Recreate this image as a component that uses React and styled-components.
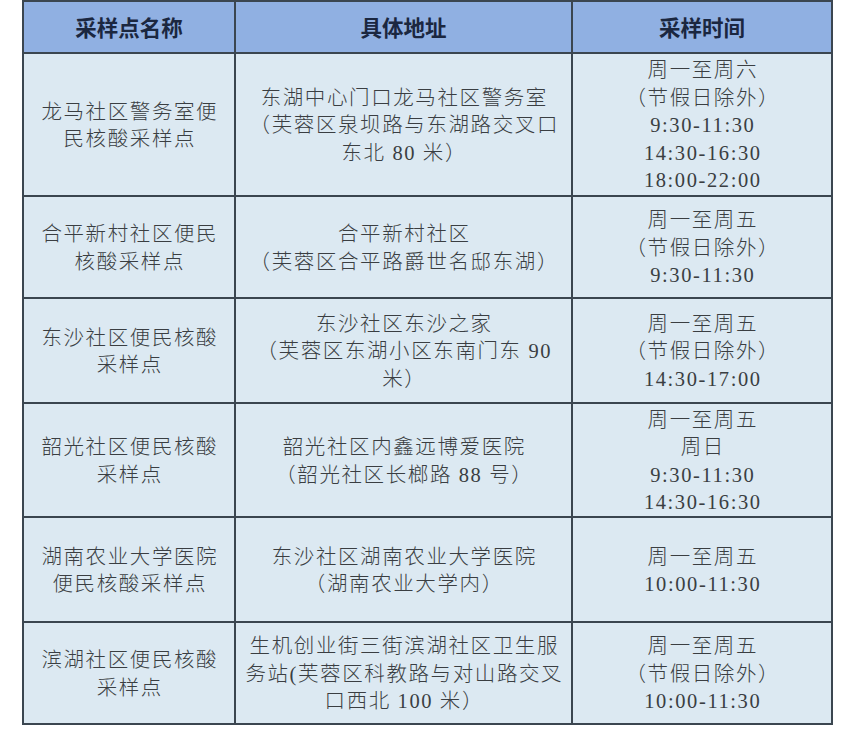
import React from "react";
import styled, { createGlobalStyle } from "styled-components";

const Global = createGlobalStyle`
  html, body { margin: 0; padding: 0; background: #ffffff; }
  body { width: 844px; height: 733px; overflow: hidden; }
`;

const Page = styled.div`
  padding: 0 0 0 22px;
  background: #ffffff;
`;

const Grid = styled.div`
  display: inline-grid;
  grid-template-columns: 210px 335px 258px;
  grid-template-rows: 50px 141px 100px 103px 112px 103px 100px;
  gap: 2px;
  padding: 2px;
  background: #3b4650;
`;

const Cell = styled.div`
  display: flex;
  flex-direction: column;
  align-items: center;
  justify-content: center;
  text-align: center;
  background: ${(p) => (p.$head ? "#90b0e2" : "#dce9f2")};
  color: ${(p) => (p.$head ? "#1b2740" : "#3a3e42")};
  font-family: ${(p) =>
    p.$head
      ? `"Noto Sans CJK SC", "Noto Sans", sans-serif`
      : `"Liberation Serif", "Noto Sans CJK SC", serif`};
  font-weight: ${(p) => (p.$head ? 700 : 300)};
  font-size: ${(p) => (p.$head ? "21.5px" : "20.5px")};
  letter-spacing: ${(p) => (p.$head ? "0" : "1.6px")};
  line-height: 27.5px;
  padding-top: ${(p) => (p.$head ? "0" : "3px")};
  padding-left: ${(p) => (p.$head ? "0" : "1.6px")};
`;

const Line = styled.div`
  white-space: nowrap;
`;

const head = ["采样点名称", "具体地址", "采样时间"];

const rows = [
  [
    ["龙马社区警务室便", "民核酸采样点"],
    ["东湖中心门口龙马社区警务室", "（芙蓉区泉坝路与东湖路交叉口", "东北 80 米）"],
    ["周一至周六", "（节假日除外）", "9:30-11:30", "14:30-16:30", "18:00-22:00"],
  ],
  [
    ["合平新村社区便民", "核酸采样点"],
    ["合平新村社区", "（芙蓉区合平路爵世名邸东湖）"],
    ["周一至周五", "（节假日除外）", "9:30-11:30"],
  ],
  [
    ["东沙社区便民核酸", "采样点"],
    ["东沙社区东沙之家", "（芙蓉区东湖小区东南门东 90", "米）"],
    ["周一至周五", "（节假日除外）", "14:30-17:00"],
  ],
  [
    ["韶光社区便民核酸", "采样点"],
    ["韶光社区内鑫远博爱医院", "（韶光社区长榔路 88 号）"],
    ["周一至周五", "周日", "9:30-11:30", "14:30-16:30"],
  ],
  [
    ["湖南农业大学医院", "便民核酸采样点"],
    ["东沙社区湖南农业大学医院", "（湖南农业大学内）"],
    ["周一至周五", "10:00-11:30"],
  ],
  [
    ["滨湖社区便民核酸", "采样点"],
    ["生机创业街三街滨湖社区卫生服", "务站(芙蓉区科教路与对山路交叉", "口西北 100 米）"],
    ["周一至周五", "（节假日除外）", "10:00-11:30"],
  ],
];

export default function App() {
  return (
    <>
      <Global />
      <Page>
        <Grid>
          {head.map((h) => (
            <Cell $head key={h}>
              {h}
            </Cell>
          ))}
          {rows.map((row, i) =>
            row.map((cell, j) => (
              <Cell key={`${i}-${j}`}>
                {cell.map((t, k) => (
                  <Line key={k}>{t}</Line>
                ))}
              </Cell>
            ))
          )}
        </Grid>
      </Page>
    </>
  );
}
